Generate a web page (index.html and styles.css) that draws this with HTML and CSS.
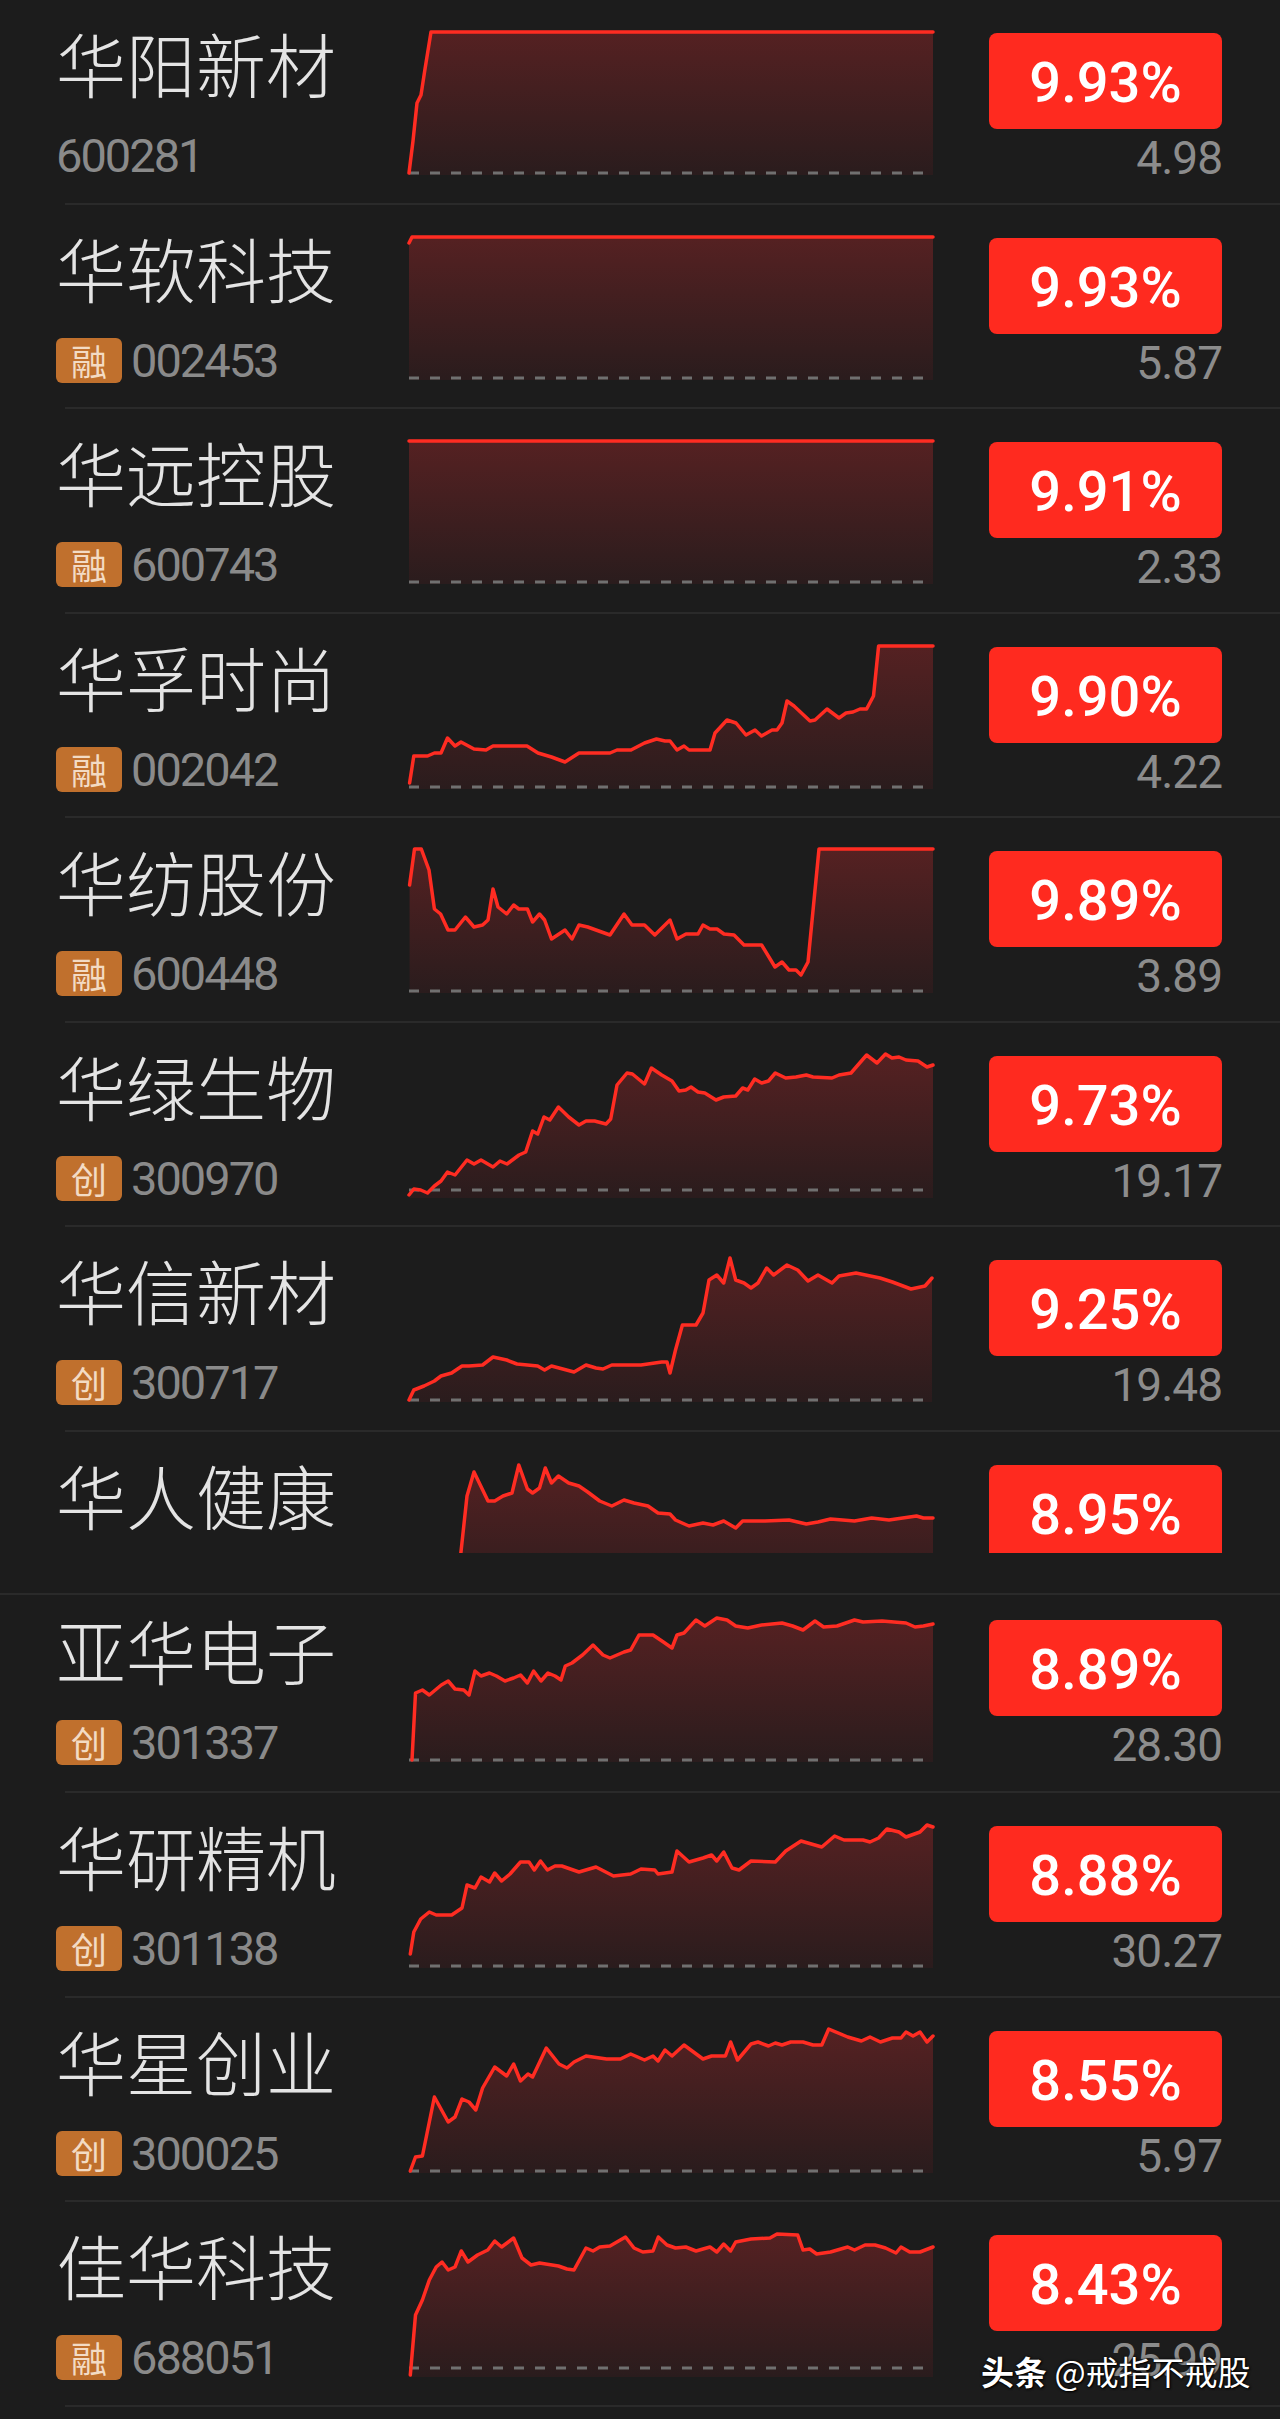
FILE: index.html
```html
<!DOCTYPE html>
<html lang="zh-CN">
<head>
  <meta charset="UTF-8">
  <title>涨幅榜</title>
  <link rel="stylesheet" href="styles.css">
</head>
<body>
  <main class="list">
    <div class="row">
      <div class="info">
        <div class="name">华阳新材</div>
        <div class="code"><span class="num">600281</span></div>
      </div>
      <svg class="spark" viewBox="0 0 524 146" data-base="144" data-pts="0,144 4,112 8,74 12,66 16,40 22,3 524,3"></svg>
      <div class="quote">
        <div class="pct">9.93%</div>
        <div class="price">4.98</div>
      </div>
    </div>

    <div class="row">
      <div class="info">
        <div class="name">华软科技</div>
        <div class="code"><span class="tag">融</span><span class="num">002453</span></div>
      </div>
      <svg class="spark" viewBox="0 0 524 146" data-base="144" data-pts="0,9 3,3 524,3"></svg>
      <div class="quote">
        <div class="pct">9.93%</div>
        <div class="price">5.87</div>
      </div>
    </div>

    <div class="row">
      <div class="info">
        <div class="name">华远控股</div>
        <div class="code"><span class="tag">融</span><span class="num">600743</span></div>
      </div>
      <svg class="spark" viewBox="0 0 524 146" data-base="144" data-pts="0,3 524,3"></svg>
      <div class="quote">
        <div class="pct">9.91%</div>
        <div class="price">2.33</div>
      </div>
    </div>

    <div class="row">
      <div class="info">
        <div class="name">华孚时尚</div>
        <div class="code"><span class="tag">融</span><span class="num">002042</span></div>
      </div>
      <svg class="spark" viewBox="0 0 524 146" data-base="144" data-pts="0.6,140 4.8,113 18.5,113 25.4,110 32,110 38.5,95 46,103 52,99 65,106 77,107 84,103 118,103 129,110 142.5,114 156,119 170,110 201,110 208,107 222,107 235.5,100 247.5,96 256,98 261,98 268,107 275,103 280,107 301,107 306,90 318,77 327,80 337,92 346,87 352.5,93 363,87 368,87 373,80 378,58 385,63 401,78 406,77 418,66 430,75 437,70 444,69 451,66 457.6,66 464.5,53 469.6,3 524,3"></svg>
      <div class="quote">
        <div class="pct">9.90%</div>
        <div class="price">4.22</div>
      </div>
    </div>

    <div class="row">
      <div class="info">
        <div class="name">华纺股份</div>
        <div class="code"><span class="tag">融</span><span class="num">600448</span></div>
      </div>
      <svg class="spark" viewBox="0 0 524 146" data-base="144" data-pts="0.6,38 5.5,2 12.3,2 20,23 25.4,62 31.6,67 39,83 46,83 56.4,70 65,80 73.6,78 79,73 84,42 89,60 97.7,67 104.6,58 109.8,62 118.4,62 123.6,75 130.5,67 135.6,73 142.5,92 156,83 163,92 170,78 178.7,80 187,83 201,88 215,67 223,78 235.5,78 245.8,88 261,73 268,92 277,87 289,87 294,78 301,82 308,82 315,87 325,88 335,98 352.6,98 366,120 373,115 380,123 387,123 392,128 399,115 410,2 524,2"></svg>
      <div class="quote">
        <div class="pct">9.89%</div>
        <div class="price">3.89</div>
      </div>
    </div>

    <div class="row">
      <div class="info">
        <div class="name">华绿生物</div>
        <div class="code"><span class="tag">创</span><span class="num">300970</span></div>
      </div>
      <svg class="spark" viewBox="0 0 524 146" data-base="138" data-pts="0,143 4.8,137 11.7,138 18.5,141 25.4,134 32,129 38.5,120 46,123 58,108 65,112 72,108 84,115 91,109 98,112 110,103 116.7,100 123.6,79 128.7,82 135,65 140.8,68 149.4,55 159.7,65 170,73 177,69 185.6,69 197,72 201.7,67 208,33 218,21 223.4,22 235.5,32 242.4,16 252.7,23 263,29 270,39 276.8,38 282,35 289,40 295.8,41 307,48 314.7,45 326.7,44 333.6,36 338.8,38 345.7,27 352.6,31 359.5,29 366.3,21 376.7,26 387,25 397.3,23 404,25 423,26 430,23 442,21 457.6,3 468,11 476.5,2 483,6 490,5 497,8 509,9 518,15 524,13"></svg>
      <div class="quote">
        <div class="pct">9.73%</div>
        <div class="price">19.17</div>
      </div>
    </div>

    <div class="row">
      <div class="info">
        <div class="name">华信新材</div>
        <div class="code"><span class="tag">创</span><span class="num">300717</span></div>
      </div>
      <svg class="spark" viewBox="0 0 524 146" data-base="144" data-pts="0,144 4.8,134 15,130 25.4,125 32,120 42.6,117 53,110 60,110 73.6,109 84,101 97.7,104 108,108 128.7,110 135.6,114 142.5,110 165,116 177,109 187,112 194,113 202.8,109 232,109 252.7,106 258,106 261,117 266.5,94 273.4,69 287,69 294,57 300,24 307.8,19 314.7,27 321,2 326.7,24 335,27 342,32 349,27 357.7,12 364.6,19 378,9 388.7,14 399,25 409,19 423,27 430,20 447,17 471,22 483.4,26 502,33 516,30 523,22"></svg>
      <div class="quote">
        <div class="pct">9.25%</div>
        <div class="price">19.48</div>
      </div>
    </div>

    <div class="row cut">
      <div class="info">
        <div class="name">华人健康</div>
      </div>
      <svg class="spark" viewBox="0 0 524 146" data-pts="51,100 58,35 65,11 79,40 85.7,40 94,35 103,32 109.8,4 118.4,28 123.6,32 130.5,27 136.3,7 142.5,22 149.4,15 159.7,22 170,25 178.7,31 190.7,40 202.8,45 215,39 225,42 239,45 249,52 261,53 266.5,59 280,65 294,62 304,64 314.7,60 326.7,67 333.6,60 356,60 380,59 397.3,63 409,61 421.5,58 445.5,60 462.7,57 480,59 493.7,57 507.5,55 514.4,57 524,57"></svg>
      <div class="quote">
        <div class="pct">8.95%</div>
      </div>
    </div>
    <div class="seam"></div>

    <div class="row after-cut">
      <div class="info">
        <div class="name">亚华电子</div>
        <div class="code"><span class="tag">创</span><span class="num">301337</span></div>
      </div>
      <svg class="spark" viewBox="0 0 524 146" data-base="144" data-pts="3,144 6.5,77 13.4,74 20.3,79 32.3,69 39.2,65 46,73 54.7,74 60,79 66,55 72,60 80.5,57 87.4,60 96,65 104.6,62 111.5,59 118.4,67 124.6,55 132,65 139,57 146,60 152,64 156.3,50 163,47 173.5,39 184,29 194,39 201,42 215,36 221.7,34 230,19 244,19 254.4,26 263,32 268,19 275,17 287,4 295.8,10 307.8,2 318,4 326.7,10 338.8,12 352.6,9 373,7 383.6,10 394,14 406,5 414.6,11 428,10 445.5,4 454,6 473,5 497,7 506,11 514.4,10 524,8"></svg>
      <div class="quote">
        <div class="pct">8.89%</div>
        <div class="price">28.30</div>
      </div>
    </div>

    <div class="row">
      <div class="info">
        <div class="name">华研精机</div>
        <div class="code"><span class="tag">创</span><span class="num">301138</span></div>
      </div>
      <svg class="spark" viewBox="0 0 524 146" data-base="144" data-pts="1.3,132 4.8,110 11.7,97 20.3,90 27.2,93 42.7,93 53,86 58,63 66,66 72,55 80.5,60 85.7,51 92.6,59 101,52 111.5,40 120,40 125.3,48 131.5,39 138.4,48 146,44 152.8,44 170,50 187,45 204.5,54 221.7,52 232,47 245.8,48 249,52 263,50 268,29 280,40 294,36 302.6,33 307.8,39 314.7,30 323,46 330,48 342,39 366.3,40 376.7,29 392,19 412.8,25 425.6,14 435,18 454,18 461,20 469.6,16 478,7 490,10 497,15 511,10 518,3 524,5"></svg>
      <div class="quote">
        <div class="pct">8.88%</div>
        <div class="price">30.27</div>
      </div>
    </div>

    <div class="row">
      <div class="info">
        <div class="name">华星创业</div>
        <div class="code"><span class="tag">创</span><span class="num">300025</span></div>
      </div>
      <svg class="spark" viewBox="0 0 524 146" data-base="144" data-pts="1.3,144 6.5,130 13.4,129 25.4,70 39.2,95 46,90 53,72 60,75 66.8,83 73.6,61 85.7,40 97.7,49 104.6,37 111.5,54 119,47 123.6,50 137.3,21 150,37 158,41 165,35 177,29 197.6,32 211.4,32 221.7,27 235.5,33 244,29 249,34 256,23 263,29 275,18 294,32 302.6,29 316.4,29 321.6,15 328.5,33 342,17 349,15 359.5,19 366.3,16 373,18 381.8,15 394,15 404,18 412.8,18 419.7,2 438.7,10 452.4,14 461,10 471.4,15 483.4,11 492,11 497,5 504,9 511,5 518,15 524,9"></svg>
      <div class="quote">
        <div class="pct">8.55%</div>
        <div class="price">5.97</div>
      </div>
    </div>

    <div class="row">
      <div class="info">
        <div class="name">佳华科技</div>
        <div class="code"><span class="tag">融</span><span class="num">688051</span></div>
      </div>
      <svg class="spark" viewBox="0 0 524 146" data-base="137" data-pts="1.3,144 6.5,84 13.4,69 20.3,49 27.2,36 33,31 39.2,39 46,36 52.3,20 59,31 68.5,24 78.8,19 85.7,10 92.6,16 104.6,7 113,27 122,34 130.5,32 149.4,35 158,38 165,39 177,17 184,20 190.7,16 201,15 216.5,6 225,17 233.8,21 244,20 249.3,6 258,14 266.5,17 276.8,16 287,20 301,16 307.8,21 314.7,13 321.6,20 326.7,11 342,8 361,7 368,3 388.7,4 394,19 400.8,18 407.7,23 421.5,21 438.7,16 445.5,19 456,14 466,14 476.5,17 487,22 492,16 500.7,21 511,21 524,16"></svg>
      <div class="quote">
        <div class="pct">8.43%</div>
        <div class="price">25.99</div>
      </div>
    </div>
  </main>

  <div class="mark"><b>头条</b> @戒指不戒股</div>

  <script>
    // build each sparkline: gradient fill, dashed prev-close line, red price line
    document.querySelectorAll('.spark').forEach(function (svg, i) {
      var pts = svg.dataset.pts.trim().split(/\s+/);
      var first = pts[0].split(',')[0];
      var last = pts[pts.length - 1].split(',')[0];
      var html = '<defs><linearGradient id="fade' + i + '" gradientUnits="userSpaceOnUse" x1="0" y1="0" x2="0" y2="146">' +
        '<stop offset="0" stop-color="#562122"/><stop offset="1" stop-color="#2a1c1d"/></linearGradient></defs>';
      html += '<polygon fill="url(#fade' + i + ')" points="' + first + ',146 ' + pts.join(' ') + ' ' + last + ',146"/>';
      if (svg.dataset.base) {
        var y = svg.dataset.base;
        html += '<line class="base" x1="0" x2="524" y1="' + y + '" y2="' + y + '"/>';
      }
      html += '<polyline class="line" points="' + pts.join(' ') + '"/>';
      svg.innerHTML = html;
    });
  </script>
</body>
</html>
```

FILE: styles.css
```css
body {
  margin: 0;
  background: #1c1c1c;
  position: relative;
  min-height: 2419px;
  overflow: hidden;
}
.list {
  border-top: 1px solid #262626;
  margin-top: -1px;
}
.row {
  display: flex;
  align-items: flex-start;
  box-sizing: border-box;
  height: 204.5px;
  padding: 29px 0 0 56px;
  background: linear-gradient(#2a2a2a, #2a2a2a) no-repeat right bottom / calc(100% - 65px) 2px;
}
.row.cut {
  height: 121.5px;
  overflow: hidden;
  background: none;
}
.seam {
  height: 42px;
  box-sizing: border-box;
  border-bottom: 2px solid #2a2a2a;
}
.row.after-cut {
  height: 198px;
  padding-top: 21px;
}
.info {
  width: 353px;
  flex: none;
}
.name {
  height: 68px;
  font: 300 70px/68px "Noto Sans CJK SC", sans-serif;
  color: #e4e4e4;
  white-space: nowrap;
}
.code {
  display: flex;
  align-items: center;
  height: 45px;
  margin-top: 36px;
}
.tag {
  width: 66px;
  height: 45px;
  margin-right: 9px;
  border-radius: 6px;
  background: #c0702d;
  color: #f3dbc4;
  font: 400 36px/45px "Noto Sans CJK SC", sans-serif;
  text-align: center;
}
.num {
  font: 400 47px/45px Roboto, sans-serif;
  letter-spacing: -2px;
  color: #8a8a8a;
}
.spark {
  display: block;
  flex: none;
  width: 524px;
  height: 146px;
  overflow: visible;
}
.spark .base {
  stroke: #707070;
  stroke-width: 3;
  stroke-dasharray: 10 11;
}
.spark .line {
  fill: none;
  stroke: #ff2c22;
  stroke-width: 3.5;
  stroke-linejoin: round;
  stroke-linecap: round;
}
.quote {
  width: 233px;
  flex: none;
  margin: 4px 0 0 56px;
}
.pct {
  box-sizing: border-box;
  height: 96px;
  padding-top: 4px;
  border-radius: 8px;
  background: #ff2a1f;
  color: #fff;
  font: 500 56px/92px Roboto, sans-serif;
  text-align: center;
}
.price {
  margin-top: 6px;
  font: 400 46px/46px Roboto, sans-serif;
  letter-spacing: -1px;
  color: #8c8c8c;
  text-align: right;
}
.mark {
  position: absolute;
  left: 981px;
  top: 2352px;
  font: 400 33px/38px "Noto Sans CJK SC", sans-serif;
  color: #fff;
  text-shadow: 0 0 3px #000, 1px 1px 2px #000;
  white-space: nowrap;
}
.mark b {
  font-weight: 700;
}
```
